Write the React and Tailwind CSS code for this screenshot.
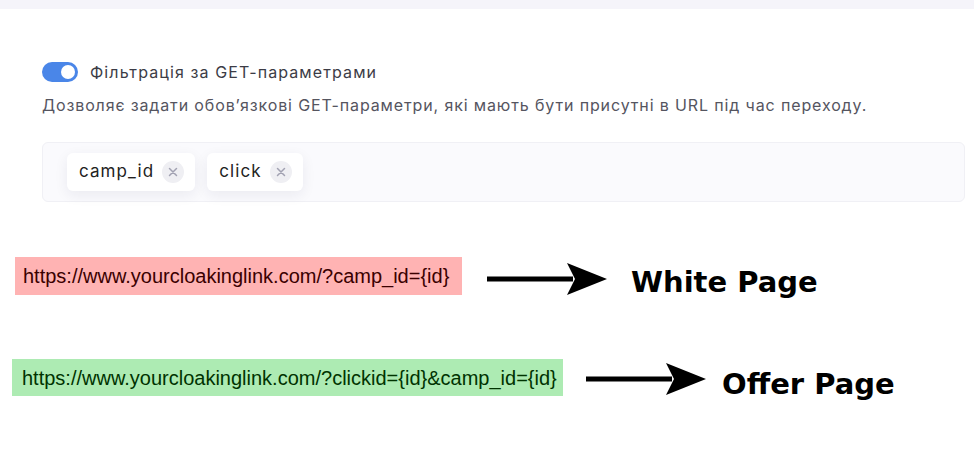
import React, { useState } from 'react';

const Arrow = () => (
  <svg width="120" height="36" viewBox="0 0 120 36" className="shrink-0">
    <rect x="0" y="15.5" width="86" height="5" fill="#000" />
    <polygon points="80,2 120,18 80,34 88,18" fill="#000" />
  </svg>
);

const Chip = ({ label }) => (
  <div className="flex items-center gap-2 h-[38px] pl-[12px] pr-[11px] bg-white rounded-md shadow-[0_4px_14px_rgba(30,30,70,0.07)]">
    <span className="text-[17px] tracking-[1.1px] text-[#222]">{label}</span>
    <span className="w-[22px] h-[22px] rounded-full bg-[#efeff3] flex items-center justify-center text-[#a2a2b2]">
      <svg width="10" height="10" viewBox="0 0 10 10">
        <path d="M1.5 1.5 L8.5 8.5 M8.5 1.5 L1.5 8.5" stroke="currentColor" strokeWidth="1.5" strokeLinecap="round" />
      </svg>
    </span>
  </div>
);

export default function App() {
  const [on, setOn] = useState(true);

  return (
    <div className="w-[974px] h-[464px] bg-white overflow-hidden" style={{ fontFamily: 'Inter, "Noto Sans", sans-serif' }}>
      <div className="h-[9px] bg-[#f5f4fa]" />

      <div className="pl-[42px] pr-[9px] pt-[53px]">
        <div className="flex items-center gap-3 h-[20px]">
          <button
            onClick={() => setOn(!on)}
            className={`w-[36px] h-[20px] rounded-full flex items-center px-[3px] ${on ? 'bg-[#4a86e8] justify-end' : 'bg-gray-300 justify-start'}`}
          >
            <span className="w-[14px] h-[14px] rounded-full bg-white" />
          </button>
          <span className="text-[16px] tracking-[1.1px] text-[#3c3c46]">Фільтрація за GET-параметрами</span>
        </div>

        <p className="mt-[13px] text-[16px] tracking-[0.87px] text-[#55555f] leading-5">
          Дозволяє задати обов’язкові GET-параметри, які мають бути присутні в URL під час переходу.
        </p>

        <div className="mt-[27px] h-[60px] rounded-md border border-[#f0f0f5] bg-[#fafafd] flex items-center gap-3 pl-[24px]">
          <Chip label="camp_id" />
          <Chip label="click" />
        </div>
      </div>

      <div className="flex items-start mt-[55px] pl-[15px]" style={{ fontFamily: '"Liberation Sans", Arial, sans-serif' }}>
        <div className="w-[447px] h-[38px] bg-[#ffb3b3] flex items-center pl-[8px] text-[20px] text-[#3a0000]">
          https://www.yourcloakinglink.com/?camp_id={'{id}'}
        </div>
        <div className="ml-[25px] mt-[4px]"><Arrow /></div>
        <span className="ml-[24px] mt-[6px] text-[29px] leading-[38px] font-bold text-black" style={{ fontFamily: '"DejaVu Sans", sans-serif' }}>White Page</span>
      </div>

      <div className="flex items-start mt-[58px] pl-[12px]" style={{ fontFamily: '"Liberation Sans", Arial, sans-serif' }}>
        <div className="w-[551px] h-[37px] bg-[#adebb3] flex items-center pl-[10px] text-[20px] text-[#003300]">
          https://www.yourcloakinglink.com/?clickid={'{id}'}&amp;camp_id={'{id}'}
        </div>
        <div className="ml-[23px] mt-[2px]"><Arrow /></div>
        <span className="ml-[16px] mt-[6px] text-[29px] leading-[38px] font-bold text-black" style={{ fontFamily: '"DejaVu Sans", sans-serif' }}>Offer Page</span>
      </div>
    </div>
  );
}
